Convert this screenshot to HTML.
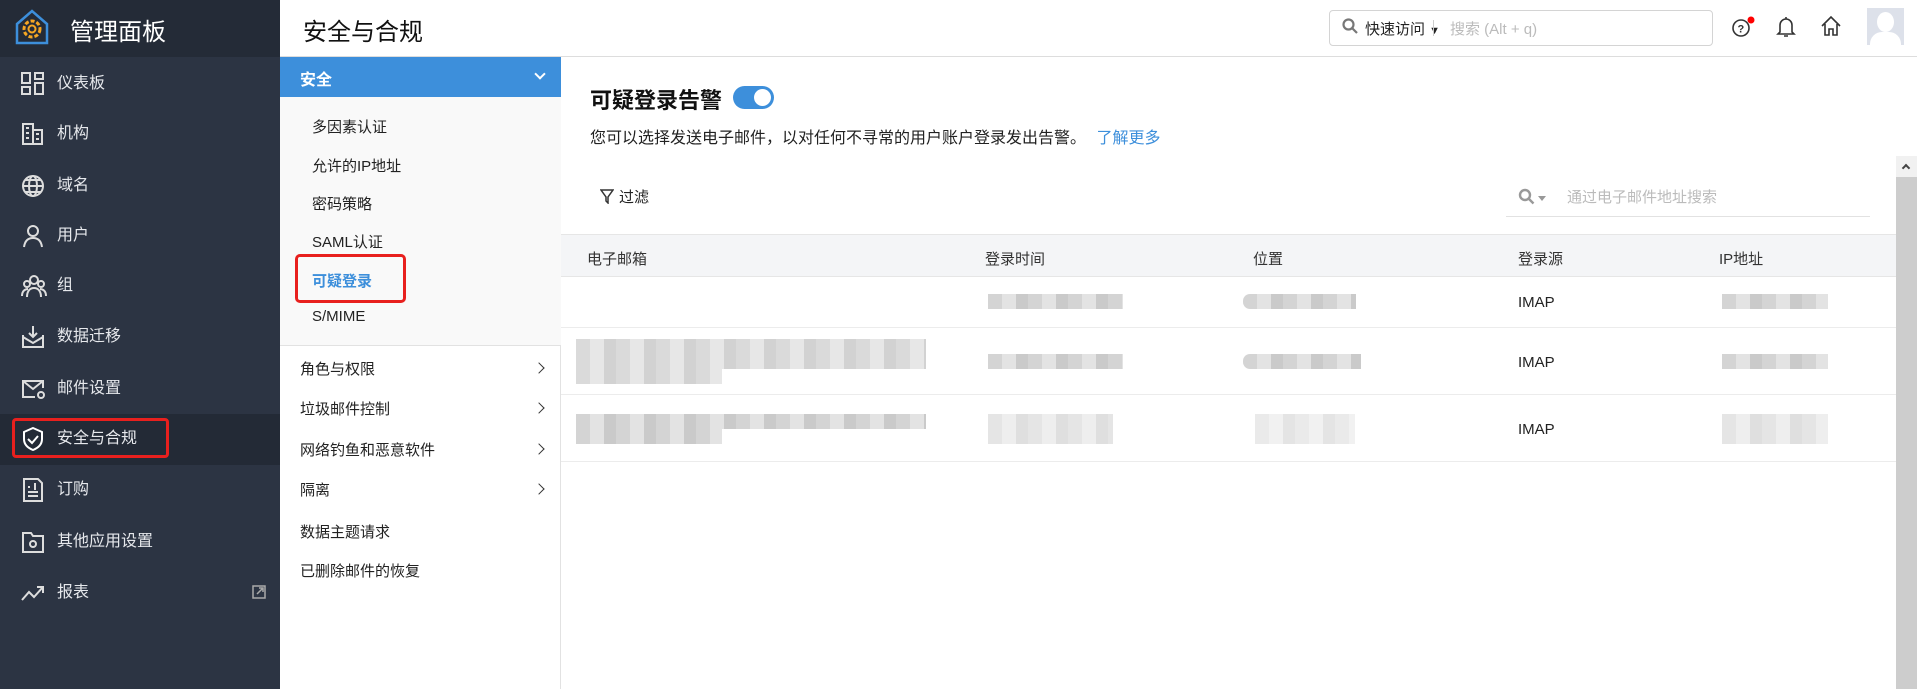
<!DOCTYPE html>
<html><head><meta charset="utf-8"><style>
*{margin:0;padding:0;box-sizing:border-box}
body{width:1917px;height:689px;overflow:hidden;font-family:"Liberation Sans","Noto Sans CJK SC",sans-serif;background:#fff;position:relative;color:#222}
.a{position:absolute}
#side{left:0;top:0;width:280px;height:689px;background:#2c3443}
#sideh{left:0;top:0;width:280px;height:57px;background:#242b37}
.nav{position:absolute;left:0;width:280px;height:50px;color:#e6e8ec;font-size:16px;line-height:50px;padding-left:57px}
.nav svg{position:absolute;left:21px;top:13px}
#p2{left:280px;top:57px;width:281px;height:632px;background:#fff;border-right:1px solid #e2e2e2}
.sub{position:absolute;left:312px;font-size:15px;color:#222}
.sec{position:absolute;left:300px;font-size:15px;color:#222}
.chev{position:absolute;left:535px;width:8px;height:8px;border-right:1.5px solid #333;border-top:1.5px solid #333;transform:rotate(45deg)}
.th{position:absolute;top:248px;font-size:15px;color:#333}
.blk{position:absolute;background:repeating-linear-gradient(90deg,#d4d4d4 0 14px,#e3e3e3 14px 28px,#cacaca 28px 40px)}
.imap{position:absolute;left:1518px;font-size:15px;color:#222}
.hr{position:absolute;left:561px;width:1335px;height:1px;background:#ececec}
</style></head><body>
<div class="a" id="side"></div><div class="a" id="sideh"></div>
<svg class="a" style="left:14px;top:8px" width="36" height="38" viewBox="0 0 36 38"><path d="M3 16 L18 3 L33 16 V35 H3 Z" fill="none" stroke="#3d8fdb" stroke-width="2.5"/><circle cx="18" cy="21" r="8" fill="none" stroke="#f5a623" stroke-width="3" stroke-dasharray="4 2"/><circle cx="18" cy="21" r="3.5" fill="none" stroke="#f5a623" stroke-width="2"/></svg>
<div class="a" style="left:70px;top:12px;font-size:24px;color:#fff">管理面板</div>
<div class="a" style="left:0;top:414px;width:280px;height:51px;background:#232a36"></div>
<div class="nav" style="top:59px"><svg width="24" height="24" fill="none" stroke="#ddd" stroke-width="2"><rect x="1" y="1" width="8" height="10"/><rect x="14" y="1" width="8" height="6"/><rect x="1" y="15" width="8" height="7"/><rect x="14" y="11" width="8" height="11"/></svg>仪表板</div>
<div class="nav" style="top:109px"><svg width="24" height="24" fill="none" stroke="#ddd" stroke-width="2"><path d="M2 22V2h10v20M12 8h9v14H1M5 6h3M5 11h3M5 16h3M15 12h3M15 17h3"/></svg>机构</div>
<div class="nav" style="top:161px"><svg width="24" height="24" fill="none" stroke="#ddd" stroke-width="2"><circle cx="12" cy="12" r="10"/><ellipse cx="12" cy="12" rx="4" ry="10"/><path d="M2 12h20M4 6h16M4 18h16"/></svg>域名</div>
<div class="nav" style="top:211px"><svg width="24" height="24" fill="none" stroke="#ddd" stroke-width="2"><circle cx="12" cy="7" r="5"/><path d="M3 23c1-7 5-9 9-9s8 2 9 9"/></svg>用户</div>
<div class="nav" style="top:261px"><svg width="26" height="24" fill="none" stroke="#ddd" stroke-width="2"><circle cx="13" cy="6" r="4"/><circle cx="6" cy="10" r="3"/><circle cx="20" cy="10" r="3"/><path d="M1 22c0-5 3-7 6-7M25 22c0-5-3-7-6-7M6 23c0-6 3-9 7-9s7 3 7 9"/></svg>组</div>
<div class="nav" style="top:312px"><svg width="24" height="24" fill="none" stroke="#ddd" stroke-width="2"><path d="M12 1v11M8 8l4 4 4-4M2 10v12h20V10M2 12l10 6 10-6"/></svg>数据迁移</div>
<div class="nav" style="top:364px"><svg width="26" height="24" fill="none" stroke="#ddd" stroke-width="2"><path d="M14 20H2V4h20v7M2 4l10 8 10-8"/><circle cx="20" cy="18" r="3"/></svg>邮件设置</div>
<div class="nav" style="top:414px"><svg width="24" height="24" fill="none" stroke="#fff" stroke-width="2"><path d="M12 1l9 4v7c0 6-4 9-9 11-5-2-9-5-9-11V5z"/><path d="M7 12l4 4 6-7"/></svg>安全与合规</div>
<div class="a" style="left:12px;top:418px;width:157px;height:40px;border:3px solid #e8201e;border-radius:4px"></div>
<div class="nav" style="top:465px"><svg width="24" height="24" fill="none" stroke="#ddd" stroke-width="2"><path d="M3 1h14l4 4v18H3z"/><path d="M7 9h2M7 14h10M7 18h10M14 5v7"/></svg>订购</div>
<div class="nav" style="top:517px"><svg width="24" height="24" fill="none" stroke="#ddd" stroke-width="2"><path d="M2 3h8l2 3h10v16H2z"/><circle cx="12" cy="14" r="3"/></svg>其他应用设置</div>
<div class="nav" style="top:568px"><svg width="24" height="24" fill="none" stroke="#ddd" stroke-width="2"><path d="M1 19l7-8 5 5 9-10M16 6h6v6"/></svg>报表</div>
<svg class="a" style="left:252px;top:585px" width="14" height="14" fill="none" stroke="#aaa" stroke-width="1.5"><rect x="1" y="1" width="12" height="12"/><path d="M5 9l6-6M7 3h4v4"/></svg>

<div class="a" style="left:280px;top:0;width:1637px;height:57px;background:#fff;border-bottom:1px solid #ddd"></div>
<div class="a" style="left:303px;top:12px;font-size:24px;color:#111">安全与合规</div>
<div class="a" style="left:1329px;top:10px;width:384px;height:36px;border:1px solid #d4d4d4;border-radius:4px"></div>
<svg class="a" style="left:1342px;top:18px" width="16" height="16" fill="none" stroke="#777" stroke-width="2.2"><circle cx="6.5" cy="6.5" r="5"/><path d="M10 10l5 5"/></svg>
<div class="a" style="left:1365px;top:18px;font-size:15px;color:#222">快速访问 <span style="font-size:11px">▼</span></div>
<div class="a" style="left:1433px;top:20px;width:1px;height:16px;background:#ccc"></div>
<div class="a" style="left:1450px;top:18px;font-size:15px;color:#bbb">搜索 (Alt + q)</div>
<svg class="a" style="left:1731px;top:16px" width="26" height="22" fill="none" stroke="#333" stroke-width="1.6"><circle cx="10" cy="12" r="8"/><text x="6.5" y="16.5" font-size="11" font-family="Liberation Sans" fill="#333" stroke="none" font-weight="bold">?</text><circle cx="20" cy="4" r="3.5" fill="#f00" stroke="none"/></svg>
<svg class="a" style="left:1776px;top:15px" width="20" height="22" fill="none" stroke="#333" stroke-width="1.6"><path d="M4 17V10a6 6 0 0112 0v7l2 2H2zM8 21h4M10 2v2"/></svg>
<svg class="a" style="left:1820px;top:15px" width="22" height="22" fill="none" stroke="#333" stroke-width="1.6"><path d="M2 11L11 2l9 9M5 9v11h4v-6h4v6h4V9"/></svg>
<div class="a" style="left:1867px;top:8px;width:37px;height:37px;background:#dde1ea;overflow:hidden"><div style="position:absolute;left:10px;top:4px;width:17px;height:20px;border-radius:50%;background:#fff"></div><div style="position:absolute;left:3px;top:24px;width:31px;height:20px;border-radius:12px 12px 0 0;background:#fff"></div></div>

<div class="a" id="p2"></div>
<div class="a" style="left:280px;top:57px;width:281px;height:40px;background:#3d8fdb"></div>
<div class="a" style="left:300px;top:66px;font-size:16px;color:#fff;font-weight:bold">安全</div>
<div class="a" style="left:536px;top:70px;width:8px;height:8px;border-right:2px solid #fff;border-bottom:2px solid #fff;transform:rotate(45deg)"></div>
<div class="a" style="left:280px;top:97px;width:281px;height:249px;background:#f9f9f9;border-bottom:1px solid #e2e2e2"></div>
<div class="sub" style="top:116px">多因素认证</div>
<div class="sub" style="top:155px">允许的IP地址</div>
<div class="sub" style="top:193px">密码策略</div>
<div class="sub" style="top:231px">SAML认证</div>
<div class="sub" style="top:270px;color:#3d8fdb;font-weight:bold">可疑登录</div>
<div class="a" style="left:295px;top:254px;width:111px;height:49px;border:3px solid #e8201e;border-radius:5px"></div>
<div class="sub" style="top:308px">S/MIME</div>
<div class="sec" style="top:358px">角色与权限</div><div class="chev" style="top:364px"></div>
<div class="sec" style="top:398px">垃圾邮件控制</div><div class="chev" style="top:404px"></div>
<div class="sec" style="top:439px">网络钓鱼和恶意软件</div><div class="chev" style="top:445px"></div>
<div class="sec" style="top:479px">隔离</div><div class="chev" style="top:485px"></div>
<div class="sec" style="top:521px">数据主题请求</div>
<div class="sec" style="top:560px">已删除邮件的恢复</div>

<div class="a" style="left:590px;top:83px;font-size:22px;font-weight:bold;color:#111">可疑登录告警</div>
<div class="a" style="left:733px;top:86px;width:41px;height:23px;border-radius:12px;background:#3d8fdb"><div style="position:absolute;right:3px;top:3px;width:17px;height:17px;border-radius:50%;background:#fff"></div></div>
<div class="a" style="left:590px;top:124px;font-size:16px;color:#222">您可以选择发送电子邮件，以对任何不寻常的用户账户登录发出告警。 <span style="color:#3d8fdb;margin-left:6px">了解更多</span></div>
<svg class="a" style="left:600px;top:188px" width="14" height="16" fill="none" stroke="#333" stroke-width="1.5"><path d="M1 2h12L8 9v6L6 13V9z"/></svg>
<div class="a" style="left:619px;top:186px;font-size:15px">过滤</div>
<svg class="a" style="left:1518px;top:188px" width="30" height="18"><circle cx="7" cy="7" r="5" fill="none" stroke="#999" stroke-width="2.4"/><path d="M10.5 10.5l5 5" stroke="#999" stroke-width="2.4"/><path d="M20 8h8l-4 5z" fill="#999"/></svg>
<div class="a" style="left:1567px;top:186px;font-size:15px;color:#bbb">通过电子邮件地址搜索</div>
<div class="a" style="left:1506px;top:216px;width:364px;height:1px;background:#e2e2e2"></div>

<div class="a" style="left:561px;top:234px;width:1335px;height:43px;background:#f4f5f7;border-top:1px solid #e6e6e6;border-bottom:1px solid #e6e6e6"></div>
<div class="th" style="left:587px">电子邮箱</div>
<div class="th" style="left:985px">登录时间</div>
<div class="th" style="left:1253px">位置</div>
<div class="th" style="left:1518px">登录源</div>
<div class="th" style="left:1719px">IP地址</div>
<div class="hr" style="top:327px"></div><div class="hr" style="top:394px"></div><div class="hr" style="top:461px"></div>

<div class="blk" style="left:988px;top:294px;width:135px;height:15px"></div>
<div class="blk" style="left:1243px;top:294px;width:113px;height:15px;border-radius:7px 0 0 7px"></div>
<div class="imap" style="top:294px">IMAP</div>
<div class="blk" style="left:1722px;top:294px;width:106px;height:15px"></div>

<div class="blk" style="left:576px;top:339px;width:350px;height:30px;opacity:.85"></div>
<div class="blk" style="left:576px;top:369px;width:146px;height:15px;opacity:.85"></div>
<div class="blk" style="left:988px;top:354px;width:135px;height:15px"></div>
<div class="blk" style="left:1243px;top:354px;width:118px;height:15px;border-radius:7px 0 0 7px"></div>
<div class="imap" style="top:354px">IMAP</div>
<div class="blk" style="left:1722px;top:354px;width:106px;height:15px"></div>

<div class="blk" style="left:576px;top:414px;width:350px;height:15px"></div>
<div class="blk" style="left:576px;top:429px;width:146px;height:15px"></div>
<div class="blk" style="left:988px;top:414px;width:125px;height:30px;opacity:.6"></div>
<div class="blk" style="left:1255px;top:414px;width:100px;height:30px;opacity:.5"></div>
<div class="imap" style="top:421px">IMAP</div>
<div class="blk" style="left:1722px;top:414px;width:106px;height:30px;opacity:.6"></div>

<div class="a" style="left:1896px;top:156px;width:21px;height:533px;background:#cdcdcd"></div>
<div class="a" style="left:1896px;top:156px;width:21px;height:21px;background:#f1f1f1"></div>
<div class="a" style="left:1903px;top:165px;width:6px;height:6px;border-left:2px solid #444;border-top:2px solid #444;transform:rotate(45deg)"></div>
</body></html>
